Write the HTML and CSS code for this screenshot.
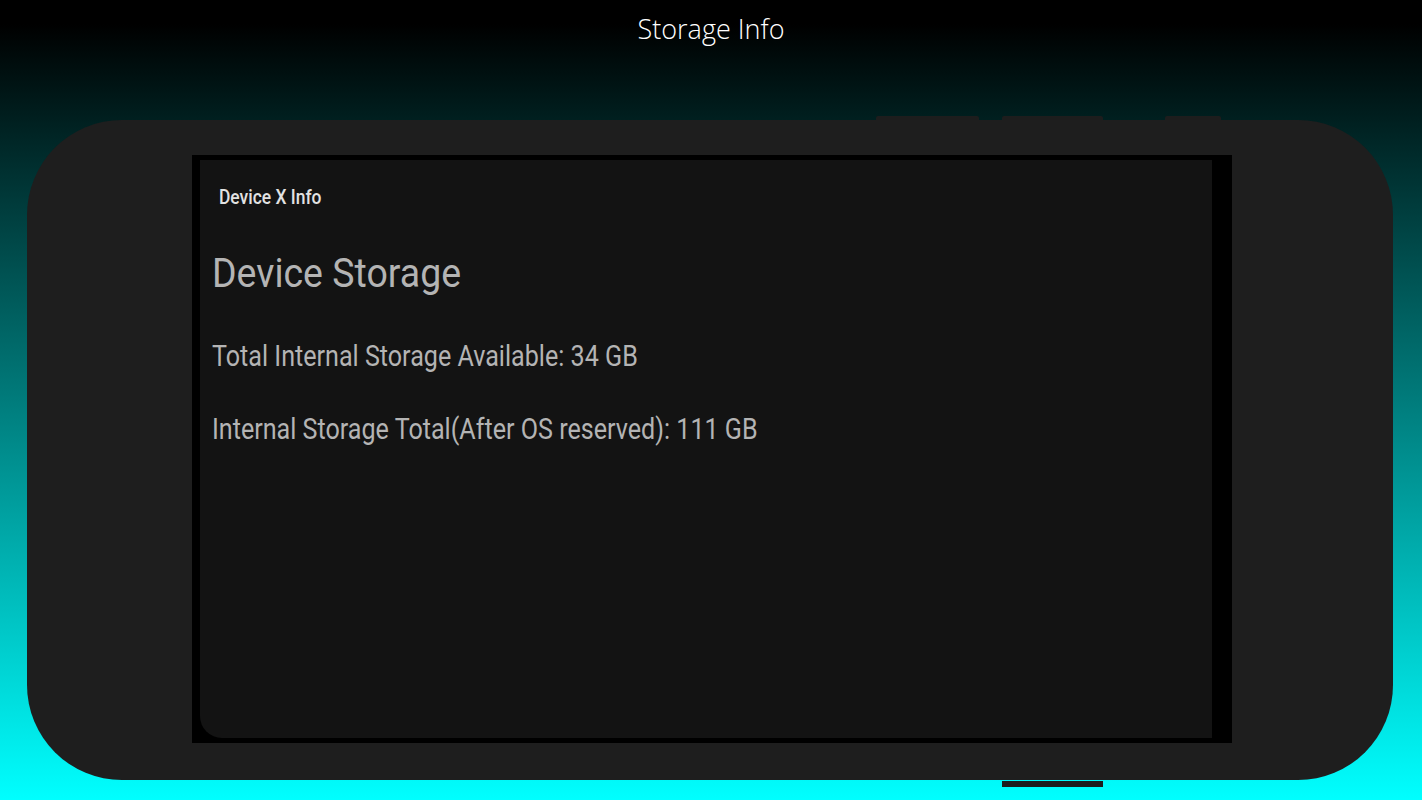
FILE: index.html
```html
<!DOCTYPE html>
<html>
<head>
<meta charset="utf-8">
<link rel="stylesheet" href="styles.css">
</head>
<body>
<header class="title-bar">
  <h1 class="title">Storage Info</h1>
</header>
<div class="side-buttons">
  <div class="btn btn-a"></div>
  <div class="btn btn-b"></div>
  <div class="btn btn-c"></div>
</div>
<div class="phone">
  <div class="screen-frame">
    <div class="screen">
      <div class="app-bar">Device X Info</div>
      <h2 class="heading">Device Storage</h2>
      <p class="line">Total Internal Storage Available: 34 GB</p>
      <p class="line">Internal Storage Total(After OS reserved): 111 GB</p>
    </div>
  </div>
</div>
<div class="bottom-buttons">
  <div class="btn-bottom"></div>
</div>
</body>
</html>
```

FILE: styles.css
```css
html, body {
  margin: 0;
  padding: 0;
}
body {
  width: 1422px;
  height: 800px;
  overflow: hidden;
  background: linear-gradient(to bottom, #000000 0%, #000000 3%, #00ffff 100%);
  font-family: "Roboto", "Liberation Sans", sans-serif;
}
.title-bar {
  height: 116px;
  box-sizing: border-box;
  padding-top: 11px;
  text-align: center;
}
.title {
  margin: 0;
  font-family: "Open Sans", "Liberation Sans", sans-serif;
  font-weight: 300;
  font-size: 27px;
  line-height: 36px;
  color: #ffffff;
}
.side-buttons {
  display: flex;
  height: 4px;
  padding-left: 876px;
}
.btn {
  height: 4px;
  background: #1d1d1d;
  border-radius: 2px 2px 0 0;
}
.btn-a { width: 103px; }
.btn-b { width: 101px; margin-left: 23px; }
.btn-c { width: 56px; margin-left: 62px; }
.phone {
  margin-left: 27px;
  width: 1366px;
  height: 660px;
  background: #1e1e1e;
  border-radius: 95px;
  box-sizing: border-box;
  padding: 35px 0 0 165px;
}
.screen-frame {
  width: 1040px;
  height: 588px;
  background: #000000;
  box-sizing: border-box;
  padding: 5px 20px 5px 8px;
}
.screen {
  width: 100%;
  height: 100%;
  background: #131313;
  border-bottom-left-radius: 22px;
  box-sizing: border-box;
  padding: 0 0 0 12px;
}
.app-bar {
  padding: 25px 0 0 8px;
  font-size: 20px;
  line-height: 24px;
  font-weight: 500;
  color: #e2e2e2;
  transform: scaleX(0.872);
  transform-origin: left top;
}
.heading {
  margin: 40px 0 0 0;
  font-size: 41px;
  line-height: 48px;
  font-weight: 400;
  color: #b4b4b4;
  transform: scaleX(0.914);
  transform-origin: left top;
}
.line {
  margin: 0;
  margin-top: 36px;
  font-size: 29px;
  line-height: 47px;
  color: #b4b4b4;
  transform: scaleX(0.866);
  transform-origin: left top;
}
.line + .line {
  margin-top: 26px;
}
.bottom-buttons {
  display: flex;
  padding-left: 1002px;
  margin-top: 1px;
}
.btn-bottom {
  width: 101px;
  height: 6px;
  background: #1c1c1c;
}
```
